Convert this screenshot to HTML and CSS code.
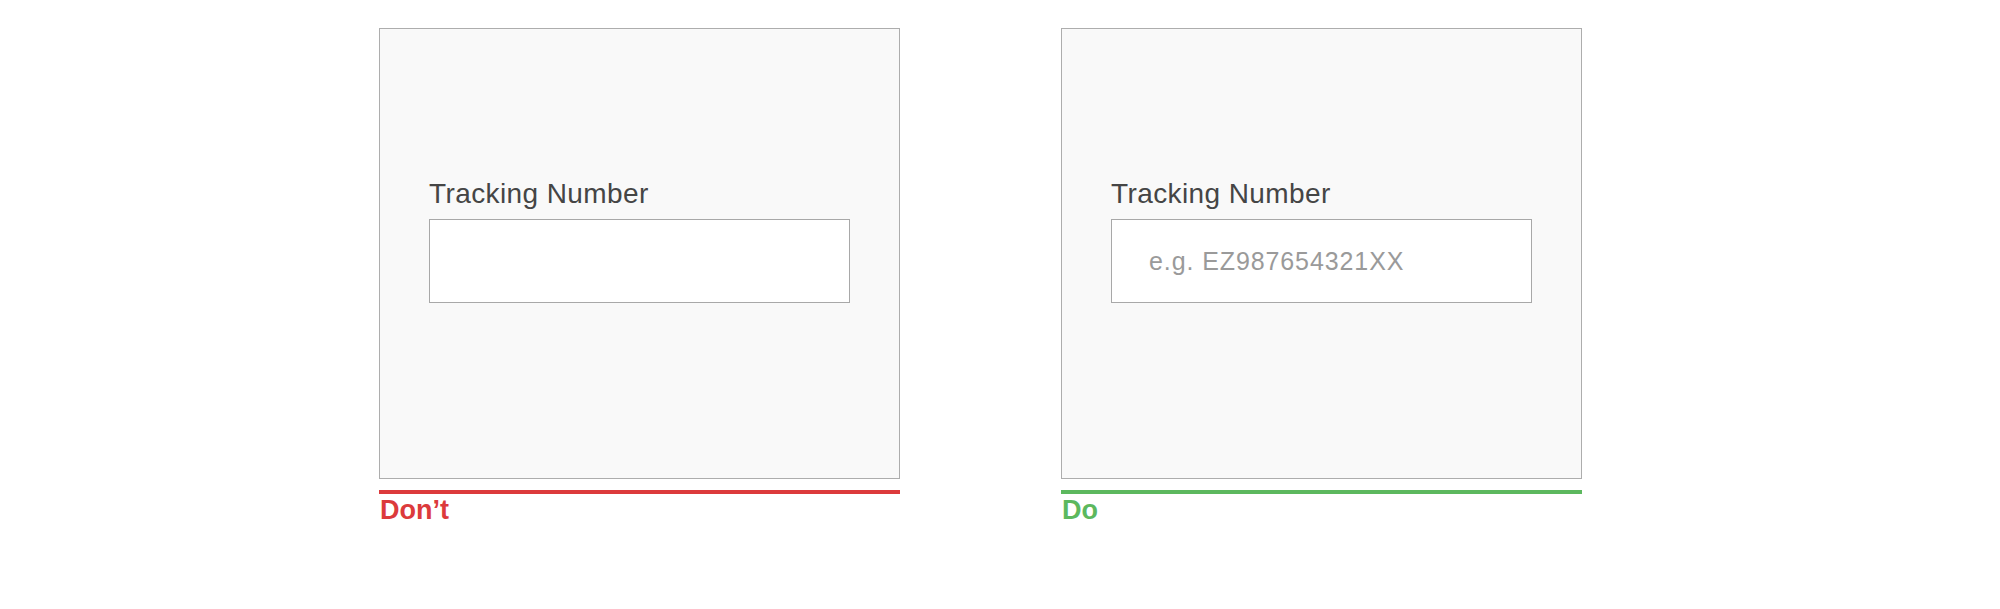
FILE: index.html
```html
<!DOCTYPE html>
<html lang="en">
<head>
  <meta charset="UTF-8">
  <meta name="viewport" content="width=device-width, initial-scale=1.0">
  <title>Tracking Number - Do / Don't</title>
  <link rel="stylesheet" href="styles.css">
</head>
<body>
  <div class="ukazky">

    <div class="ukazka">
      <div class="karta">
        <label class="popisek" for="cislo1">Tracking Number</label>
        <input class="pole" id="cislo1" type="text">
      </div>
      <div class="cara spatne"></div>
      <p class="verdikt spatne-text">Don’t</p>
    </div>

    <div class="ukazka">
      <div class="karta">
        <label class="popisek" for="cislo2">Tracking Number</label>
        <input class="pole" id="cislo2" type="text" placeholder="e.g. EZ987654321XX">
      </div>
      <div class="cara dobre"></div>
      <p class="verdikt dobre-text">Do</p>
    </div>

  </div>
</body>
</html>
```

FILE: styles.css
```css
html, body {
  margin: 0;
  padding: 0;
  height: 100%;
}
body {
  background-color: white;
  font-family: "Liberation Sans", Arial, sans-serif;
}
.ukazky {
  display: flex;
  gap: 161px;
  padding: 28px 0 0 379px;
}
.ukazka {
  width: 521px;
}
.karta {
  box-sizing: border-box;
  height: 451px;
  padding: 149px 49px 0;
  background-color: #f9f9f9;
  border: 1px solid #adadad;
  display: flex;
  flex-direction: column;
}
.popisek {
  font-size: 28px;
  line-height: 32px;
  letter-spacing: 0.4px;
  color: #454545;
  margin-bottom: 9px;
}
.pole {
  box-sizing: border-box;
  width: 100%;
  height: 84px;
  margin: 0;
  padding: 0 0 0 37px;
  border: 1px solid #a8a8a8;
  border-radius: 0;
  background-color: white;
  font-family: "Liberation Sans", Arial, sans-serif;
  font-size: 25px;
  letter-spacing: 0.9px;
  color: #444;
  outline: none;
}
.pole::placeholder {
  color: #9a9a9a;
}
.cara {
  height: 4px;
  margin-top: 11px;
}
.spatne {
  background-color: #dc3a3c;
}
.dobre {
  background-color: #5cb85e;
}
.verdikt {
  margin: 1px 0 0 1px;
  font-size: 27px;
  line-height: 30px;
  font-weight: bold;
}
.spatne-text {
  color: #dc3a3c;
}
.dobre-text {
  color: #5cb85e;
}
```
